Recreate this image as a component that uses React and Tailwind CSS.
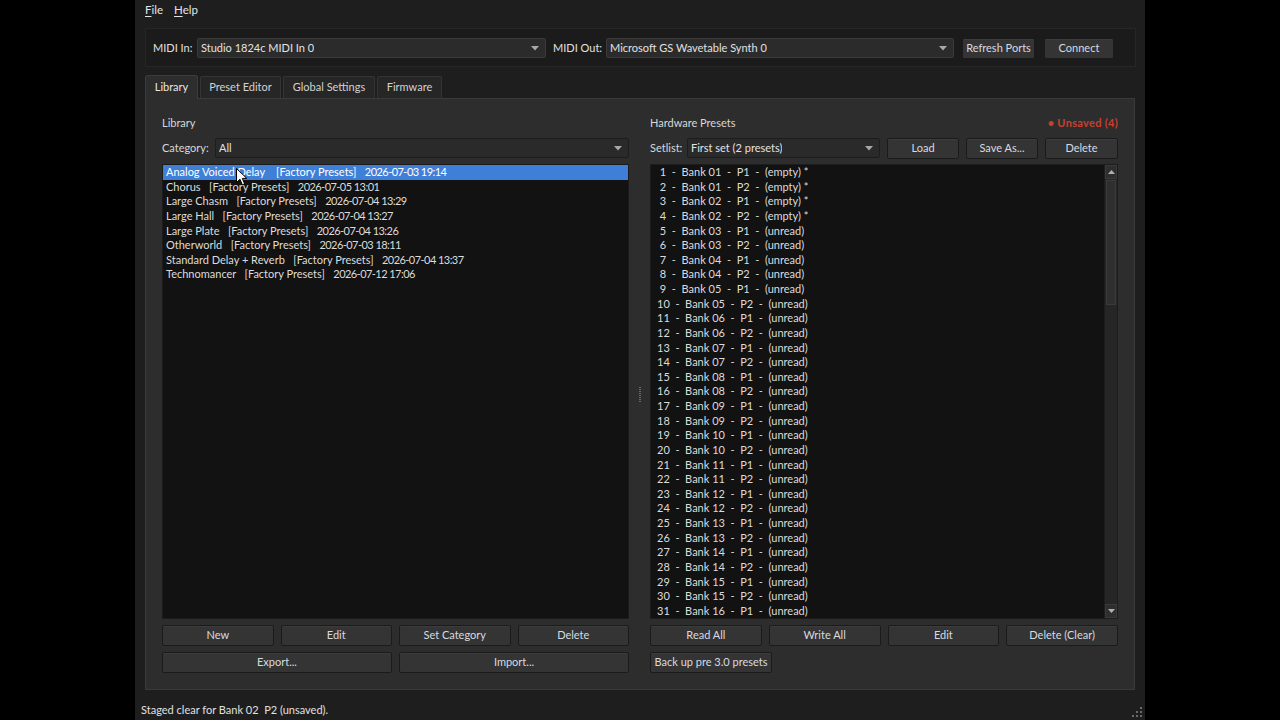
import React from "react";

const FONT = { fontFamily: "Lato, 'Noto Sans', sans-serif" };

function Btn({ children, className = "" }) {
  return (
    <div
      className={
        "h-[21px] flex items-center justify-center rounded-[2px] border border-[#1b1b1b] bg-[#343434] text-[#d6dbe0] shadow-[inset_0_1px_0_#3c3c3c] " +
        className
      }
    >
      {children}
    </div>
  );
}

function Arrow() {
  return (
    <svg width="8" height="5" viewBox="0 0 8 5" className="shrink-0">
      <path d="M0 0 L8 0 L4 4.5 Z" fill="#a8a8a8" />
    </svg>
  );
}

function Combo({ text, className = "", dark = false }) {
  return (
    <div
      className={
        "h-[20px] flex items-center justify-between pl-[3px] pr-[6px] rounded-[2px] border " +
        (dark ? "bg-[#2b2b2b] border-[#3a3a3a] " : "bg-[#2a2a2a] border-[#1d1d1d] ") +
        className
      }
    >
      <span className="text-[#e2e2e2] truncate">{text}</span>
      <Arrow />
    </div>
  );
}

const library = [
  ["Analog Voiced Delay", "2026-07-03 19:14"],
  ["Chorus", "2026-07-05 13:01"],
  ["Large Chasm", "2026-07-04 13:29"],
  ["Large Hall", "2026-07-04 13:27"],
  ["Large Plate", "2026-07-04 13:26"],
  ["Otherworld", "2026-07-03 18:11"],
  ["Standard Delay + Reverb", "2026-07-04 13:37"],
  ["Technomancer", "2026-07-12 17:06"],
];

const hw = Array.from({ length: 31 }, (_, i) => {
  const n = i + 1;
  const bank = String(Math.ceil(n / 2)).padStart(2, "0");
  const p = n % 2 === 1 ? "P1" : "P2";
  const state = n <= 4 ? "(empty) *" : "(unread)";
  return `${n < 10 ? " " : ""}${n}  -  Bank ${bank}  -  ${p}  -  ${state}`;
});

function Cursor() {
  return (
    <svg
      width="12"
      height="18"
      viewBox="0 0 12 18"
      className="absolute left-[236px] top-[168px] pointer-events-none"
    >
      <path
        d="M0.5 0.5 L0.5 14.5 L4 11.2 L6.3 16.8 L8.6 15.8 L6.3 10.4 L10.8 10.4 Z"
        fill="#ffffff"
        stroke="#000000"
        strokeWidth="1"
        strokeLinejoin="round"
      />
    </svg>
  );
}

function Grip() {
  const dots = [
    [8, 0],
    [4, 4],
    [8, 4],
    [0, 8],
    [4, 8],
    [8, 8],
  ];
  return (
    <svg width="11" height="11" viewBox="0 0 11 11" className="absolute right-[2px] bottom-[2px]">
      {dots.map(([x, y], i) => (
        <rect key={i} x={x} y={y} width="2" height="2" fill="#6a6a6a" />
      ))}
    </svg>
  );
}

export default function App() {
  return (
    <div className="w-[1280px] h-[720px] bg-black flex justify-center text-[11px] relative overflow-hidden" style={FONT}>
      <div className="w-[1010px] h-[720px] bg-[#1e1e1e] flex flex-col relative text-[#dcdcdc]">
        {/* Menu bar */}
        <div className="h-[20px] flex items-center pl-[10px] gap-[11px] text-[#e4e4e4] text-[11.5px]">
          <span>
            <span className="underline underline-offset-2">F</span>ile
          </span>
          <span>
            <span className="underline underline-offset-2">H</span>elp
          </span>
        </div>

        {/* MIDI group */}
        <div className="mt-[8px] ml-[10px] mr-[9px] h-[39px] border border-[#262626] bg-[#1b1b1b] flex items-start pt-[9px] pl-[7px]">
          <div className="flex items-center h-[20px]">
            <span className="w-[44px] text-[#e0e0e0]">MIDI In:</span>
            <Combo text="Studio 1824c MIDI In 0" className="w-[349px]" dark />
            <span className="ml-[7px] w-[53px] text-[#e0e0e0]">MIDI Out:</span>
            <Combo text="Microsoft GS Wavetable Synth 0" className="w-[348px]" dark />
            <Btn className="ml-[8px] w-[73px] h-[20px]">Refresh Ports</Btn>
            <Btn className="ml-[9px] w-[70px] h-[20px]">Connect</Btn>
          </div>
        </div>

        {/* Tabs */}
        <div className="mt-[7px] ml-[10px] h-[24px] flex items-end gap-[2px]">
          <div className="h-[24px] w-[53px] flex items-center justify-center bg-[#2d2d2d] border border-b-0 border-[#3c3c3c] rounded-t-[3px] text-[#e8e8e8] relative top-[1px]">
            Library
          </div>
          <div className="h-[22px] w-[81px] flex items-center justify-center bg-[#262626] border border-b-0 border-[#343434] rounded-t-[2px] text-[#d2d2d2]">
            Preset Editor
          </div>
          <div className="h-[22px] w-[92px] flex items-center justify-center bg-[#262626] border border-b-0 border-[#343434] rounded-t-[2px] text-[#d2d2d2]">
            Global Settings
          </div>
          <div className="h-[22px] w-[65px] flex items-center justify-center bg-[#262626] border border-b-0 border-[#343434] rounded-t-[2px] text-[#d2d2d2]">
            Firmware
          </div>
        </div>

        {/* Panel */}
        <div className="mx-[10px] h-[592px] bg-[#2d2d2d] border border-[#3a3a3a] flex px-[16px] pt-[16px]">
          {/* Left column */}
          <div className="w-[467px] flex flex-col">
            <div className="h-[16px] flex items-center text-[#d8d8d8]">Library</div>
            <div className="mt-[7px] h-[20px] flex items-center">
              <span className="w-[53px] text-[#d8d8d8]">Category:</span>
              <Combo text="All" className="flex-1" />
            </div>
            <div className="mt-[6px] h-[455px] bg-[#121212] border border-[#1c1c1c] leading-[14.63px]">
              {library.map(([name, date], i) => (
                <div
                  key={i}
                  className={
                    "h-[14.63px] pl-[3px] whitespace-pre " +
                    (i === 0 ? "bg-[#3f7fd8] text-white" : "text-[#dcdcdc]")
                  }
                >
                  {name}
                  {i === 0 ? "    " : "   "}[Factory Presets]{"   "}
                  <span className="tracking-[-0.55px]">{date}</span>
                </div>
              ))}
            </div>
            <div className="mt-[6px] grid grid-cols-4 gap-[7px]">
              <Btn>New</Btn>
              <Btn>Edit</Btn>
              <Btn>Set Category</Btn>
              <Btn>Delete</Btn>
            </div>
            <div className="mt-[6px] grid grid-cols-2 gap-[7px]">
              <Btn>Export...</Btn>
              <Btn>Import...</Btn>
            </div>
          </div>

          {/* Splitter */}
          <div className="w-[21px] flex flex-col items-center justify-center">
            <div className="flex flex-col gap-[1px] mt-[-16px]">
              {Array.from({ length: 8 }, (_, i) => (
                <div key={i} className="w-[2px] h-[1px] bg-[#6a6a6a]" />
              ))}
            </div>
          </div>

          {/* Right column */}
          <div className="w-[468px] flex flex-col">
            <div className="h-[16px] flex items-center justify-between">
              <span className="text-[#d8d8d8]">Hardware Presets</span>
              <span className="text-[#c8402f] font-bold tracking-[0.3px]">• Unsaved (4)</span>
            </div>
            <div className="mt-[7px] h-[20px] flex items-center">
              <span className="w-[37px] text-[#d8d8d8]">Setlist:</span>
              <Combo text="First set  (2 presets)" className="flex-1 whitespace-pre" />
              <Btn className="ml-[7px] w-[72px] h-[20px]">Load</Btn>
              <Btn className="ml-[7px] w-[72px] h-[20px]">Save As...</Btn>
              <Btn className="ml-[7px] w-[73px] h-[20px]">Delete</Btn>
            </div>
            <div className="mt-[6px] h-[455px] bg-[#121212] border border-[#1c1c1c] flex overflow-hidden">
              <div className="flex-1 pl-[6px] leading-[14.63px] text-[#dcdcdc] overflow-hidden">
                {hw.map((t, i) => (
                  <div key={i} className="h-[14.63px] whitespace-pre">
                    {t}
                  </div>
                ))}
              </div>
              <div className="w-[13px] bg-[#262626] border-l border-[#1c1c1c] flex flex-col">
                <div className="h-[14px] flex items-center justify-center bg-[#2e2e2e] border border-[#3a3a3a]">
                  <svg width="7" height="4" viewBox="0 0 7 4">
                    <path d="M0 4 L7 4 L3.5 0 Z" fill="#b0b0b0" />
                  </svg>
                </div>
                <div className="h-[125px] mx-[1px] mt-[1px] bg-[#2f2f2f] border border-[#3b3b3b]" />
                <div className="flex-1" />
                <div className="h-[14px] flex items-center justify-center bg-[#2e2e2e] border border-[#3a3a3a]">
                  <svg width="7" height="4" viewBox="0 0 7 4">
                    <path d="M0 0 L7 0 L3.5 4 Z" fill="#b0b0b0" />
                  </svg>
                </div>
              </div>
            </div>
            <div className="mt-[6px] grid grid-cols-4 gap-[7px]">
              <Btn>Read All</Btn>
              <Btn>Write All</Btn>
              <Btn>Edit</Btn>
              <Btn>Delete (Clear)</Btn>
            </div>
            <div className="mt-[6px] flex">
              <Btn className="w-[122px]">Back up pre 3.0 presets</Btn>
            </div>
          </div>
        </div>

        {/* Status bar */}
        <div className="flex-1 flex items-start pt-[12px] pl-[6px] text-[#e0e0e0] whitespace-pre">
          Staged clear for Bank 02  P2 (unsaved).
        </div>
        <Grip />
      </div>
      <Cursor />
    </div>
  );
}
